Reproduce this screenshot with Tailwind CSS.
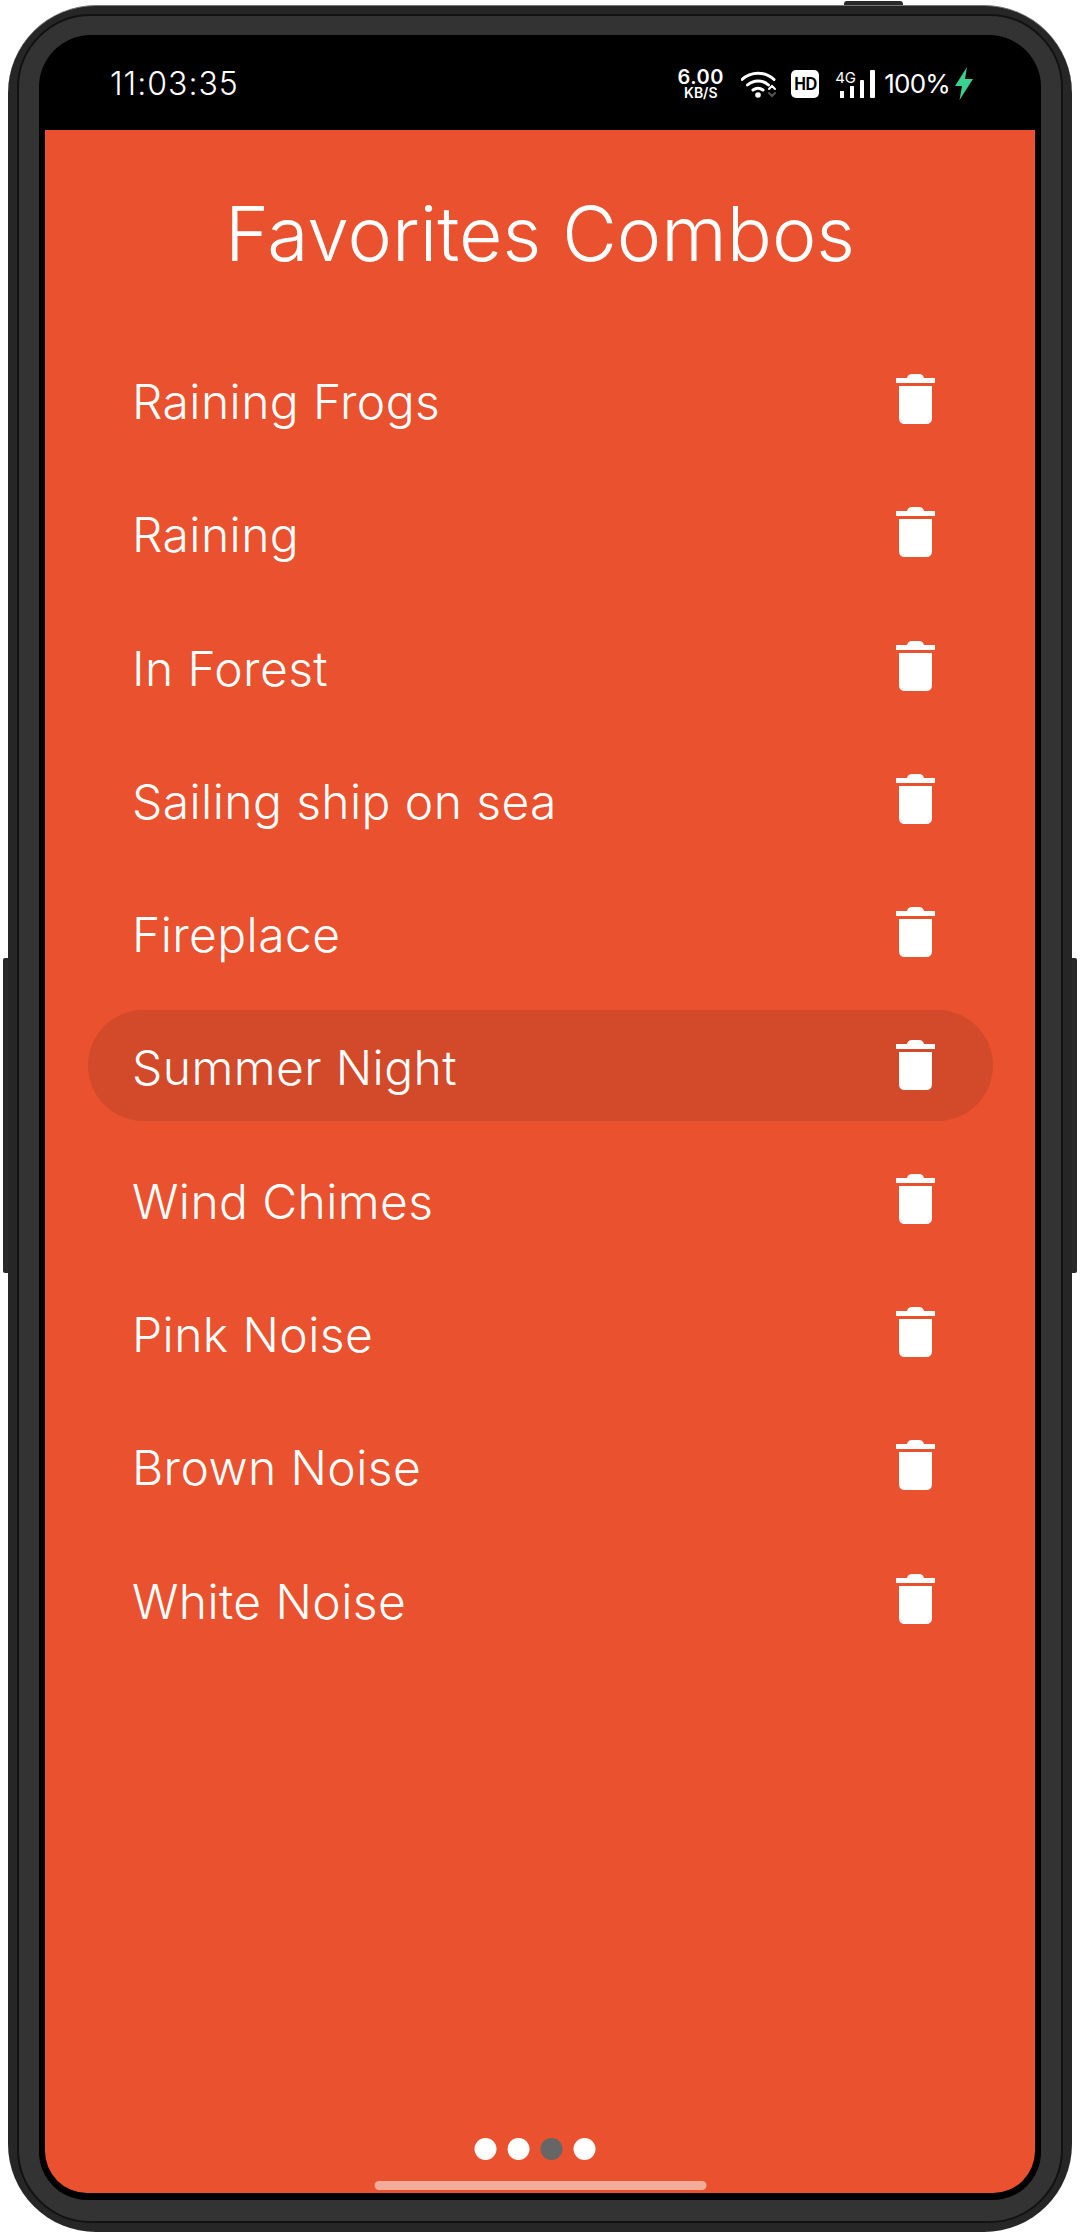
<!DOCTYPE html>
<html>
<head>
<meta charset="utf-8">
<script src="https://cdn.jsdelivr.net/npm/@tailwindcss/browser@4"></script>
</head>
<body class="m-0 bg-white">
<div class="relative w-[1080px] h-[2234px] overflow-hidden bg-white pt-[5px] pl-[8px] font-['Inter',sans-serif] text-white">
  <div class="absolute left-[3px] top-[958px] w-[6px] h-[315px] rounded-l-[2px] bg-[#2a2a2a]"></div>
  <div class="absolute right-[3px] top-[958px] w-[6px] h-[315px] rounded-r-[2px] bg-[#2a2a2a]"></div>
  <div class="absolute left-[844px] top-[1px] w-[59px] h-[6px] rounded-t-[3px] bg-[#2a2a2a]"></div>
  <div class="relative w-[1064px] h-[2227px] rounded-[88px] bg-[#262626] border-t border-[#777] pt-[8px] px-[9px] pb-[9px]">
    <div class="w-full h-full rounded-[74px] bg-[#333333] border-2 border-[#121212] pt-[19px] px-[20px] pb-[21px]">
      <div class="w-full h-full flex flex-col rounded-t-[52px] rounded-b-[48px] bg-black">
        <div class="h-[95px] shrink-0 relative flex items-center justify-between pl-[71px] pr-[68px]">
          <span class="mt-[3px] text-[32px] leading-none tracking-[1px] font-light">11:03:35</span>
          <div class="flex items-center h-[40px] mt-[2px]">
            <div class="flex flex-col items-center w-[47px] font-semibold leading-none">
              <span class="text-[20px] leading-[17px] tracking-[0.5px]">6.00</span>
              <span class="text-[14px] leading-[13px]">KB/S</span>
            </div>
            <svg class="ml-[17px] w-[36px] h-[28px]" viewBox="0 0 36 28" fill="none">
              <path d="M1 9.5 C10 1 24 1 33 9.5" stroke="#fff" stroke-width="3" stroke-linecap="round"/>
              <path d="M6.5 15 C12.5 9.5 21.5 9.5 27.5 15" stroke="#fff" stroke-width="3" stroke-linecap="round"/>
              <path d="M12 20 C15 17.8 19 17.8 22 20" stroke="#fff" stroke-width="3" stroke-linecap="round"/>
              <circle cx="17" cy="25" r="2.8" fill="#fff"/>
              <path d="M28 19 L31 16 L34 19" stroke="#fff" stroke-width="2" stroke-linecap="round"/>
              <path d="M28 23 L31 26 L34 23" stroke="#555" stroke-width="2" stroke-linecap="round"/>
            </svg>
            <div class="ml-[14px] w-[28px] h-[28px] rounded-[5px] bg-white flex items-center justify-center text-black font-['Liberation_Sans',sans-serif] font-bold text-[18px] leading-none tracking-[-0.5px]"><span class="scale-x-90">HD</span></div>
            <div class="relative ml-[16px] w-[41px] h-[28px]">
              <span class="absolute left-0 top-0 text-[15px] leading-[15px] tracking-[-0.3px]">4G</span>
              <div class="absolute left-[5px] bottom-0 flex items-end gap-[6px]">
                <div class="w-[4px] h-[7px] bg-white"></div>
                <div class="w-[4px] h-[12px] bg-white"></div>
                <div class="w-[4px] h-[18px] bg-white rounded-t-[1px]"></div>
                <div class="w-[5px] h-[28px] bg-white rounded-[1px]"></div>
              </div>
            </div>
            <span class="ml-[8px] text-[26px] leading-none font-normal tracking-[-0.8px]">100%</span>
            <svg class="ml-[5px] w-[18px] h-[33px]" viewBox="0 0 18 33"><path d="M12 0 L0 19 H7 L4.5 33 L18 12 H10 Z" fill="#3ad28e"/></svg>
          </div>
        </div>
        <div class="flex-1 flex flex-col items-center mx-[6px] mb-[7px] rounded-b-[42px] bg-[#ea512e] relative">
          <h1 class="mt-[61px] h-[86px] text-[75px] leading-[86px] font-light tracking-[0px] whitespace-nowrap">Favorites Combos</h1>
          <ul class="mt-[66.5px] w-[905px] flex flex-col gap-[22.3px] self-start ml-[43px]">
            <li class="h-[111px] flex items-center justify-between pl-[44px] pr-[58px] rounded-[56px]"><span class="text-[48px] pt-[6px] font-light tracking-[0.4px]">Raining Frogs</span><svg class="w-[39px] h-[50px]" viewBox="0 0 39 50" fill="#fff"><path d="M11 4 Q12 0 16 0 H23 Q27 0 28 4 H39 V9 H0 V4 Z"/><path d="M3 12 H36 V44 Q36 50 30 50 H9 Q3 50 3 44 Z"/></svg></li>
            <li class="h-[111px] flex items-center justify-between pl-[44px] pr-[58px] rounded-[56px]"><span class="text-[48px] pt-[6px] font-light tracking-[0.4px]">Raining</span><svg class="w-[39px] h-[50px]" viewBox="0 0 39 50" fill="#fff"><path d="M11 4 Q12 0 16 0 H23 Q27 0 28 4 H39 V9 H0 V4 Z"/><path d="M3 12 H36 V44 Q36 50 30 50 H9 Q3 50 3 44 Z"/></svg></li>
            <li class="h-[111px] flex items-center justify-between pl-[44px] pr-[58px] rounded-[56px]"><span class="text-[48px] pt-[6px] font-light tracking-[0.4px]">In Forest</span><svg class="w-[39px] h-[50px]" viewBox="0 0 39 50" fill="#fff"><path d="M11 4 Q12 0 16 0 H23 Q27 0 28 4 H39 V9 H0 V4 Z"/><path d="M3 12 H36 V44 Q36 50 30 50 H9 Q3 50 3 44 Z"/></svg></li>
            <li class="h-[111px] flex items-center justify-between pl-[44px] pr-[58px] rounded-[56px]"><span class="text-[48px] pt-[6px] font-light tracking-[0.4px]">Sailing ship on sea</span><svg class="w-[39px] h-[50px]" viewBox="0 0 39 50" fill="#fff"><path d="M11 4 Q12 0 16 0 H23 Q27 0 28 4 H39 V9 H0 V4 Z"/><path d="M3 12 H36 V44 Q36 50 30 50 H9 Q3 50 3 44 Z"/></svg></li>
            <li class="h-[111px] flex items-center justify-between pl-[44px] pr-[58px] rounded-[56px]"><span class="text-[48px] pt-[6px] font-light tracking-[0.4px]">Fireplace</span><svg class="w-[39px] h-[50px]" viewBox="0 0 39 50" fill="#fff"><path d="M11 4 Q12 0 16 0 H23 Q27 0 28 4 H39 V9 H0 V4 Z"/><path d="M3 12 H36 V44 Q36 50 30 50 H9 Q3 50 3 44 Z"/></svg></li>
            <li class="h-[111px] flex items-center justify-between pl-[44px] pr-[58px] rounded-[56px] bg-[#d24a2a]"><span class="text-[48px] pt-[6px] font-light tracking-[0.4px]">Summer Night</span><svg class="w-[39px] h-[50px]" viewBox="0 0 39 50" fill="#fff"><path d="M11 4 Q12 0 16 0 H23 Q27 0 28 4 H39 V9 H0 V4 Z"/><path d="M3 12 H36 V44 Q36 50 30 50 H9 Q3 50 3 44 Z"/></svg></li>
            <li class="h-[111px] flex items-center justify-between pl-[44px] pr-[58px] rounded-[56px]"><span class="text-[48px] pt-[6px] font-light tracking-[0.4px]">Wind Chimes</span><svg class="w-[39px] h-[50px]" viewBox="0 0 39 50" fill="#fff"><path d="M11 4 Q12 0 16 0 H23 Q27 0 28 4 H39 V9 H0 V4 Z"/><path d="M3 12 H36 V44 Q36 50 30 50 H9 Q3 50 3 44 Z"/></svg></li>
            <li class="h-[111px] flex items-center justify-between pl-[44px] pr-[58px] rounded-[56px]"><span class="text-[48px] pt-[6px] font-light tracking-[0.4px]">Pink Noise</span><svg class="w-[39px] h-[50px]" viewBox="0 0 39 50" fill="#fff"><path d="M11 4 Q12 0 16 0 H23 Q27 0 28 4 H39 V9 H0 V4 Z"/><path d="M3 12 H36 V44 Q36 50 30 50 H9 Q3 50 3 44 Z"/></svg></li>
            <li class="h-[111px] flex items-center justify-between pl-[44px] pr-[58px] rounded-[56px]"><span class="text-[48px] pt-[6px] font-light tracking-[0.4px]">Brown Noise</span><svg class="w-[39px] h-[50px]" viewBox="0 0 39 50" fill="#fff"><path d="M11 4 Q12 0 16 0 H23 Q27 0 28 4 H39 V9 H0 V4 Z"/><path d="M3 12 H36 V44 Q36 50 30 50 H9 Q3 50 3 44 Z"/></svg></li>
            <li class="h-[111px] flex items-center justify-between pl-[44px] pr-[58px] rounded-[56px]"><span class="text-[48px] pt-[6px] font-light tracking-[0.4px]">White Noise</span><svg class="w-[39px] h-[50px]" viewBox="0 0 39 50" fill="#fff"><path d="M11 4 Q12 0 16 0 H23 Q27 0 28 4 H39 V9 H0 V4 Z"/><path d="M3 12 H36 V44 Q36 50 30 50 H9 Q3 50 3 44 Z"/></svg></li>
          </ul>
          <div class="mt-auto flex gap-[11px] translate-x-[-5.5px]">
            <div class="w-[22px] h-[22px] rounded-full bg-white"></div>
            <div class="w-[22px] h-[22px] rounded-full bg-white"></div>
            <div class="w-[22px] h-[22px] rounded-full bg-[#666]"></div>
            <div class="w-[22px] h-[22px] rounded-full bg-white"></div>
          </div>
          <div class="mt-[21px] mb-[3px] w-[332px] h-[9px] rounded-[5px] bg-[#f4ab99] translate-x-[0.5px]"></div>
        </div>
      </div>
    </div>
  </div>
</div>
</body>
</html>
